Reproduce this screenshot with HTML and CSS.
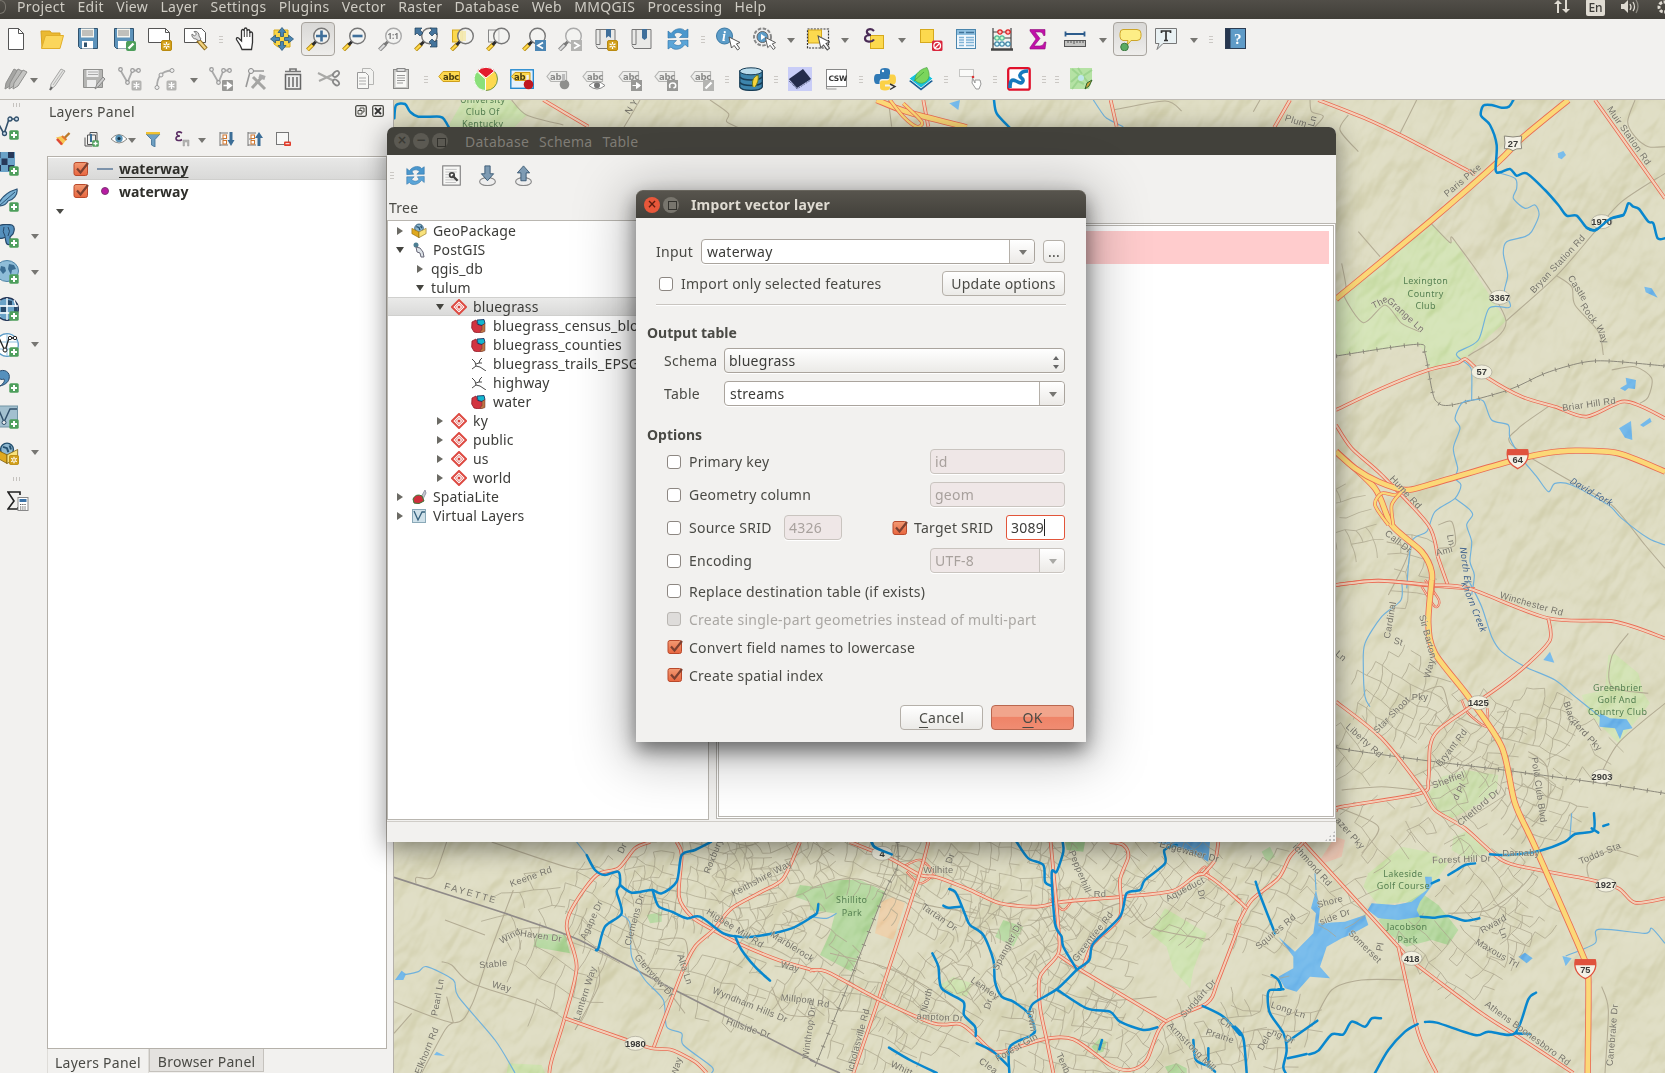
FILE: index.html
```html
<!DOCTYPE html>
<html lang="en">
<head>
<meta charset="utf-8">
<title>QGIS - Import vector layer</title>
<link rel="stylesheet" href="styles.css">
</head>
<body>
<svg class="defs" width="0" height="0" aria-hidden="true">
  <defs>
    <linearGradient id="gCheck" x1="0" y1="0" x2="0" y2="1"><stop offset="0" stop-color="#f29a73"/><stop offset="1" stop-color="#e8663f"/></linearGradient>
    <symbol id="plus" viewBox="0 0 10 10"><rect x=".3" y=".3" width="9.4" height="9.4" rx="1.5" fill="#4d9e5b"/><path d="M5 2v6M2 5h6" stroke="#fff" stroke-width="2"/></symbol>
    <symbol id="star" viewBox="0 0 11 11"><rect x=".5" y=".5" width="10" height="10" rx="1.5" fill="#d2a01b" stroke="#b98a10"/><path d="M5.500 2v7M2.500 3.700l6 3.600M8.500 3.700l-6 3.600" stroke="#fff" stroke-width="1.300"/><circle cx="5.500" cy="5.500" r="1" fill="#d2a01b"/></symbol>
    <symbol id="gstar" viewBox="0 0 11 11"><rect x=".5" y=".5" width="10" height="10" rx="1.500" fill="#b4b4b2"/><path d="M5.500 2v7M2.500 3.700l6 3.600M8.500 3.700l-6 3.600" stroke="#fff" stroke-width="1.300"/></symbol>
    <symbol id="lens" viewBox="0 0 24 24"><path d="M1.500 23L7.500 17" stroke="#b58a10" stroke-width="4"/><path d="M1.700 22.800L7.500 17" stroke="#ffd94a" stroke-width="2.300"/><path d="M6.500 18l4-4" stroke="#2c2c2c" stroke-width="3"/><circle cx="15.500" cy="9" r="7.800" fill="#f3f3f1" fill-opacity=".85" stroke="#777" stroke-width="1.400"/></symbol>
    <symbol id="glens" viewBox="0 0 24 24"><path d="M1.500 23L7.500 17" stroke="#888" stroke-width="4"/><path d="M1.700 22.800L7.500 17" stroke="#ddd" stroke-width="2"/><path d="M6.500 18l4-4" stroke="#777" stroke-width="3"/><circle cx="15.500" cy="9" r="7.800" fill="#f3f3f1" stroke="#aaa" stroke-width="1.400"/></symbol>
    <symbol id="cursor" viewBox="0 0 13 15"><path d="M1 1l2.500 11 2.600-2.600 3.400 4.600 2.200-1.600-3.300-4.500 3.600-1.400z" fill="#fff" stroke="#555" stroke-width="1"/></symbol>
    <symbol id="tag" viewBox="0 0 22 12"><path d="M5 1h15.500v10H5L1 6z" fill="#eeeeec" stroke="#b5b5b3" stroke-width="1.200"/></symbol>
    <symbol id="vnode" viewBox="0 0 24 24"><path d="M2 2.500L9.500 15.500l5-12h6" fill="none" stroke="#aaa" stroke-width="1.800"/><g fill="#eee" stroke="#999" stroke-width="1.200"><circle cx="2.500" cy="2.500" r="1.800"/><circle cx="9.500" cy="15.500" r="1.800"/><circle cx="14.500" cy="3.500" r="1.800"/><circle cx="20.500" cy="3.500" r="1.800"/></g></symbol>
    <symbol id="checked" viewBox="0 0 16 16"><rect x="1" y="1.500" width="13.500" height="13" rx="2" fill="url(#gCheck)" stroke="#b9492b"/><path d="M4 7.500l3.500 4L15 2" fill="none" stroke="#7d4030" stroke-width="2.200"/></symbol>
    <symbol id="target" viewBox="0 0 16 16"><path d="M8 1L15 8 8 15 1 8z" fill="#fff" stroke="#dd4a42" stroke-width="2"/><path d="M8 4.300L11.700 8 8 11.700 4.300 8z" fill="none" stroke="#e0635c" stroke-width=".9"/><circle cx="8" cy="8" r="1.500" fill="#d9443c"/></symbol>
    <symbol id="poly" viewBox="0 0 15 14"><path d="M1 3l4-2 1 4 7 1v6l-5 2-5-1L.7 9z" fill="#d23440" stroke="#8e1c28" stroke-width=".8"/><path d="M6 1l7-.5 1 4-3 2-4-1z" fill="#14b7d0" stroke="#125" stroke-width=".8"/><path d="M11 6.500l3-2v8l-4 1.500-1-2 2-1z" fill="#c07443" stroke="#633" stroke-width=".5"/></symbol>
    <symbol id="line" viewBox="0 0 15 14"><path d="M1 2l3 3 1 4 4 1 6 4M5 9L1 12M5 7l3-1 1-3M8 6h3M9 3l2-2" fill="none" stroke="#333" stroke-width=".9"/></symbol>
    <symbol id="refresh" viewBox="0 0 24 24"><path d="M2 11V4l3 2.500C10 0 17 1 19 4l3-2v8.500h-8.500l3-2.800C14 4.500 9 5 8 8l2 2.500z" fill="#4a97cd" stroke="#2a6fa5" stroke-width=".6"/><path d="M22 13v7l-3-2.500C14 24 7 23 5 20l-3 2v-8.500h8.500l-3 2.800C10 19.500 15 19 16 16l-2-2.500z" fill="#5ba5d8" stroke="#2a6fa5" stroke-width=".6"/></symbol>
    <symbol id="box" viewBox="0 0 18 16"><circle cx="9" cy="5" r="4.800" fill="#8fb8d0" stroke="#24506f"/><path d="M6 3l3 1 1 3M11 2l1 3" stroke="#24506f" stroke-width="1.500" fill="none"/><path d="M1 5l8 4v6.500L1 11z" fill="#dfa91f" stroke="#7c5e10" stroke-width=".6"/><path d="M17 5L9 9v6.500l8-4.500z" fill="#f8e27c" stroke="#7c5e10" stroke-width=".6"/></symbol>
  </defs>
</svg>

<nav class="menubar">
  <i class="orb"></i><span>Project</span><span>Edit</span><span>View</span><span>Layer</span><span>Settings</span><span>Plugins</span><span>Vector</span><span>Raster</span><span>Database</span><span>Web</span><span>MMQGIS</span><span>Processing</span><span>Help</span>
  <div class="tray">
    <svg width="18" height="16" viewBox="0 0 18 16"><path d="M5 14V4M13 1v10" stroke="#dfdbd2" stroke-width="2"/><path d="M1 5l4-4 4 4zM9 10l4 4 4-4z" fill="#dfdbd2"/></svg>
    <b>En</b>
    <svg width="20" height="16" viewBox="0 0 20 16"><path d="M1 5h3l4-4v13l-4-4H1z" fill="#dfdbd2"/><path d="M10 5q2 3 0 6M13 3q3 5 0 9" fill="none" stroke="#dfdbd2" stroke-width="1.300"/><path d="M16 1q4 6 0 13" fill="none" stroke="#8a877f" stroke-width="1.300"/></svg>
    <svg width="10" height="16" viewBox="0 0 10 16"><circle cx="9" cy="8" r="5" fill="none" stroke="#dfdbd2" stroke-width="3" stroke-dasharray="3 1.500"/></svg>
  </div>
</nav>

<div class="toolbars">
  <div class="bar bar1">
    <div class="t"><svg viewBox="0 0 24 24"><path d="M4.500 1.500h10l5 5v16h-15z" fill="#fff" stroke="#555"/><path d="M14.500 1.500v5h5" fill="none" stroke="#555"/></svg></div>
    <div class="t"><svg viewBox="0 0 24 24"><path d="M1 4h9l1.500 2H20v3H6L2 21z" fill="#eab932" stroke="#d8a320"/><path d="M5.500 8.500H23.500L20 21.500H1.500z" fill="#fbd65c" stroke="#e2ae29"/></svg></div>
    <div class="t"><svg viewBox="0 0 24 24"><path d="M2.500 1.500h19v20h-17l-2-2z" fill="#5d93bb" stroke="#31536e"/><rect x="5" y="1.500" width="13" height="9" fill="#f5f5f0"/><path d="M6 4h11M6 6h11M6 8h11" stroke="#8a8a86"/><rect x="6" y="14" width="11" height="7.500" fill="#fff"/><rect x="8" y="15.500" width="3" height="4.500" fill="#31536e"/></svg></div>
    <div class="t"><svg viewBox="0 0 24 24"><path d="M2.500 1.500h19v20h-17l-2-2z" fill="#5d93bb" stroke="#31536e"/><rect x="5" y="1.500" width="13" height="9" fill="#f5f5f0"/><path d="M6 4h11M6 6h11M6 8h11" stroke="#8a8a86"/><rect x="6" y="14" width="9" height="7.500" fill="#fff"/><rect x="14" y="14" width="10" height="10" rx="2" fill="#4d9e5b"/><path d="M16.500 21.500l5-5" stroke="#fff" stroke-width="2.400"/></svg></div>
    <div class="t"><svg viewBox="0 0 24 24"><path d="M.5 1.500h17l4 4v10H.5z" fill="#fff" stroke="#555"/><path d="M17.500 1.500v4h4" fill="none" stroke="#555"/><use href="#star" x="13" y="13" width="11" height="11"/></svg></div>
    <div class="t"><svg viewBox="0 0 24 24"><path d="M.5 1.500h17l4 4v10H.5z" fill="#fff" stroke="#555"/><path d="M14 13l8 9" stroke="#8d6b1c" stroke-width="4.500"/><path d="M15 14l6.500 7.500" stroke="#f2d27e" stroke-width="2.500"/><path d="M8 7a4 4 0 0 0 4 5l3 2 2-2-2-3a4 4 0 0 0-5-4.500l2.500 2.500-2 2z" fill="#ddd" stroke="#777"/></svg></div>
    <i class="grip g14"></i>
    <div class="t"><svg viewBox="0 0 24 24"><path d="M8 22.500L6 18 2.500 12.500C2 10.500 4 10 5.500 12l2 2V4c0-2 2.500-2 2.700 0V2.500c.3-2 2.600-2 2.800 0V4c.3-1.700 2.700-1.700 2.800 0v2c.5-1.500 2.700-1.300 2.700.5v9L17.500 22.500z" fill="#fff" stroke="#333" stroke-width="1.300"/><path d="M10.300 4v6M13 4v6M15.800 5v5" stroke="#333"/></svg></div>
    <div class="t"><svg viewBox="0 0 24 24"><path d="M4 3h14v5l2 2v10H8l-4-3z" fill="#fbd646" stroke="#d6a91c"/><path d="M12 .5l4 5h-2.500v4h-3v-4H8zM12 23.500l4-5h-2.500v-4h-3v4H8zM.5 12l5-4v2.500h4v3h-4V16zM23.500 12l-5-4v2.500h-4v3h4V16z" fill="#4b86b4" stroke="#2b5878" stroke-width=".8"/></svg></div>
    <div class="t on"><svg viewBox="0 0 24 24"><use href="#lens"/><path d="M15.500 3.500v11M10 9h11" stroke="#3f6f9a" stroke-width="2.600"/></svg></div>
    <div class="t"><svg viewBox="0 0 24 24"><use href="#lens"/><path d="M10.500 9h10" stroke="#3f6f9a" stroke-width="2.600"/></svg></div>
    <div class="t"><svg viewBox="0 0 24 24"><use href="#glens"/><text x="9.500" y="12.300" class="one">1:1</text></svg></div>
    <div class="t"><svg viewBox="0 0 24 24"><use href="#lens"/><path d="M1 1h7L6 3l3 3-3 3-3-3-2 2zM23 1v7l-2-2-3 3-3-3 3-3-2-2zM23 20h-7l2-2-3-3 3-3 3 3 2-2z" fill="#44749c" stroke="#24425c" stroke-width=".7"/></svg></div>
    <div class="t"><svg viewBox="0 0 24 24"><rect x="2.500" y="3" width="10" height="12" fill="#fcd94e" stroke="#d6a91c"/><use href="#lens"/><rect x="10" y="4" width="6" height="10" fill="#f4e69c" opacity=".7"/></svg></div>
    <div class="t"><svg viewBox="0 0 24 24"><rect x="2.500" y="3" width="10" height="12" fill="#f3f3f1" stroke="#888"/><use href="#lens"/><path d="M13 3v12" stroke="#ccc"/></svg></div>
    <div class="t"><svg viewBox="0 0 24 24"><use href="#lens"/><rect x="13" y="13" width="11" height="11" fill="#4b86b4"/><path d="M21 15.500l-5 3 5 3" fill="none" stroke="#fff" stroke-width="1.800"/></svg></div>
    <div class="t"><svg viewBox="0 0 24 24"><use href="#glens"/><rect x="13" y="13" width="11" height="11" fill="#b4b4b2"/><path d="M16 15.500l5 3-5 3" fill="none" stroke="#fff" stroke-width="1.800"/></svg></div>
    <div class="t"><svg viewBox="0 0 24 24"><path d="M2 2.500h4v15H2zM6 2.500h15v19H4l-2-3" fill="#e9e9e7" stroke="#777"/><path d="M12 2h5v9l-2.500-2-2.500 2z" fill="#3f6f9a"/><use href="#star" x="13" y="13" width="11" height="11"/></svg></div>
    <div class="t"><svg viewBox="0 0 24 24"><path d="M2 2.500h4v15H2zM6 2.500h15v19H4l-2-3" fill="#e9e9e7" stroke="#777"/><path d="M12 2h5v9l-2.500 2-2.500-2z" fill="#3f6f9a"/></svg></div>
    <div class="t"><svg viewBox="0 0 24 24"><use href="#refresh"/></svg></div>
    <i class="grip g14"></i>
    <div class="t"><svg viewBox="0 0 24 24"><circle cx="8.500" cy="9" r="8" fill="#5b9cc8" stroke="#3c7aa5"/><text x="6" y="14" class="info-i">i</text><use href="#cursor" x="12" y="9" width="13" height="15"/></svg></div>
    <div class="t"><svg viewBox="0 0 24 24"><circle cx="10.500" cy="10" r="8.500" fill="#eee" stroke="#888" stroke-width="2" stroke-dasharray="3.500 1.500"/><circle cx="10.500" cy="10" r="5.500" fill="#5b9cc8" stroke="#666"/><path d="M9 7l4.500 3L9 13z" fill="#fff"/><use href="#cursor" x="12.500" y="9.500" width="12" height="14"/></svg></div>
    <i class="dd d18"></i>
    <div class="t"><svg viewBox="0 0 24 24"><rect x="1.500" y="2" width="21" height="19" fill="none" stroke="#333" stroke-width="1.200" stroke-dasharray="2 1.200"/><rect x="2.500" y="3" width="13" height="13" fill="#fcd94e" stroke="#d6a91c"/><use href="#cursor" x="11" y="8" width="14" height="16"/></svg></div>
    <i class="dd d18"></i>
    <div class="t"><svg viewBox="0 0 24 24"><rect x="10.500" y="8.500" width="13" height="13" fill="#fcd94e" stroke="#d6a91c"/><path d="M14 4C11 1 6 2 7 5.500Q8 8 11 8 5 8 5 11.500c0 4 7 4 9 1" fill="none" stroke="#4b2d57" stroke-width="2.200"/></svg></div>
    <i class="dd d23"></i>
    <div class="t"><svg viewBox="0 0 24 24"><rect x="1.500" y="2.500" width="13" height="13" fill="#fcd94e" stroke="#d6a91c"/><rect x="13" y="13.500" width="10.500" height="10.500" rx="1.500" fill="#d9263c"/><circle cx="18.200" cy="18.700" r="3.300" fill="none" stroke="#fff" stroke-width="1.300"/><path d="M16 21l4.500-4.500" stroke="#fff" stroke-width="1.300"/></svg></div>
    <div class="t"><svg viewBox="0 0 24 24"><rect x="1.500" y="2.500" width="19" height="19" fill="#f0f7fc" stroke="#4a86ad"/><rect x="2" y="3" width="18" height="5" fill="#8fc0e0"/><path d="M4 5.500h5M11 5.500h8" stroke="#3f7299" stroke-width="1.500"/><path d="M4 10.500h5M11 10.500h8M4 13h5M11 13h8M4 15.500h5M11 15.500h8M4 18.500h5M11 18.500h8" stroke="#7fb3d6" stroke-width="1.300"/></svg></div>
    <div class="t"><svg viewBox="0 0 24 24"><path d="M2 1v21M20 1v21M2 5h18M2 11h18M2 17h18" stroke="#444" stroke-width="1.200"/><path d="M0 22.500h22" stroke="#444" stroke-width="2.500"/><g stroke-width="1.200"><g fill="#fbb" stroke="#d22"><circle cx="9" cy="5" r="2.200"/><circle cx="17" cy="5" r="2.200"/></g><g fill="#cfc" stroke="#5b9"><circle cx="6" cy="11" r="2.200"/><circle cx="11" cy="11" r="2.200"/></g><g fill="#dff" stroke="#48a"><circle cx="6" cy="17" r="2.200"/><circle cx="11" cy="17" r="2.200"/><circle cx="17" cy="17" r="2.200"/></g></g></svg></div>
    <div class="t"><svg viewBox="0 0 24 24"><path d="M3 2.500h15v6h-1.500Q16 5 13 5H8l5 6.500L7 19h6q3.500 0 4.500-4H19l-1 7H3v-1.500L9 12 3 4z" fill="#c010a8" stroke="#8d0b7b" stroke-width=".6"/></svg></div>
    <div class="t"><svg viewBox="0 0 24 24"><path d="M2.500 7h19M2.500 4.500v5M21.500 4.500v5" stroke="#2d5c8c" stroke-width="1.800"/><rect x="1.500" y="13.500" width="21" height="6" fill="#c4c4c2" stroke="#555"/><path d="M5 13v3M8 13v3M11 13v4M14 13v3M17 13v3M20 13v3" stroke="#555"/></svg></div>
    <i class="dd d19"></i>
    <div class="t on"><svg viewBox="0 0 24 24"><path d="M5 2.500h14q4 0 4 4v3q0 4-4 4h-6l-4 5 1-5H5q-3-.5-3-4v-3q0-4 3-4z" fill="#fdee86" stroke="#cda52a"/><circle cx="6.500" cy="20" r="3.800" fill="#5aab62" stroke="#3f7a44"/></svg></div>
    <div class="t"><svg viewBox="0 0 24 24"><path d="M1.500 1.500h21v15H9l-6 6 2-6H1.500z" fill="#e9f1f3" stroke="#777"/><path d="M7.500 6V4h9v2M12 4v9.500M10 13.500h4" stroke="#333" stroke-width="1.700" fill="none"/></svg></div>
    <i class="dd d20"></i><i class="grip g14"></i>
    <div class="t"><svg viewBox="0 0 24 24"><rect x="1.500" y="1.500" width="20" height="20" fill="#5f9bc7" stroke="#2c3c52"/><rect x="2" y="2" width="4.500" height="19" fill="#26364f"/><text x="10" y="17" class="q">?</text></svg></div>
  </div>
  <div class="bar bar2">
    <div class="t w26"><svg viewBox="0 0 24 24"><g stroke="#8f8f8d"><path d="M1 22l1-6L10 2l4 2L6 19z" fill="#a5a5a3"/><path d="M5 22l1-6L14 2l4 2-8 15z" fill="#b8b8b6"/><path d="M9 22l1-6L19 3l4 2-9 14z" fill="#c5c5c3"/></g></svg></div>
    <i class="dd d10"></i>
    <div class="t w37"><svg viewBox="0 0 24 24"><path d="M4 23l1-6L15 2l4 2L9 19z" fill="#e4e4e2" stroke="#a5a5a3"/><path d="M7 18L17 3.500" stroke="#b5b5b3"/><path d="M4 23l2-3" stroke="#666" stroke-width="2"/></svg></div>
    <div class="t"><svg viewBox="0 0 24 24"><path d="M1.500 2.500h19v18h-19z" fill="#b5b5b3" stroke="#8f8f8d"/><rect x="4.500" y="3" width="12" height="7" fill="#eee"/><path d="M6 5h10M6 7.500h10" stroke="#aaa"/><rect x="5" y="13" width="9" height="7" fill="#eee"/><path d="M13 22l2-5 6-7 2 2-6 7z" fill="#ccc" stroke="#888"/></svg></div>
    <div class="t"><svg viewBox="0 0 24 24"><use href="#vnode"/><use href="#gstar" x="13" y="13" width="11" height="11"/></svg></div>
    <div class="t"><svg viewBox="0 0 24 24"><path d="M3 20C3 10 8 4 17 3.500" fill="none" stroke="#aaa" stroke-width="1.800"/><g fill="#eee" stroke="#999"><circle cx="3" cy="20.500" r="2"/><circle cx="7" cy="8" r="2"/><circle cx="18" cy="3.500" r="2"/></g><use href="#gstar" x="12" y="13" width="11" height="11"/></svg></div>
    <i class="dd d19"></i>
    <div class="t"><svg viewBox="0 0 24 24"><use href="#vnode"/><rect x="13" y="13" width="11" height="11" rx="1" fill="#989896"/><path d="M14.500 18.500h4v-3l4 3-4 3v-3" fill="#fff" stroke="#fff" stroke-width="1.400"/></svg></div>
    <div class="t"><svg viewBox="0 0 24 24"><path d="M6 4h13M5 5L1 20" stroke="#999" stroke-width="1.600"/><circle cx="6" cy="4" r="2.500" fill="#eee" stroke="#888"/><path d="M7 21l11-12M8 10l12 12" stroke="#a5a5a3" stroke-width="3"/><path d="M14 9l6 2" stroke="#aaa" stroke-width="4"/></svg></div>
    <div class="t"><svg viewBox="0 0 24 24"><path d="M4.500 7.500h15v14.500h-15z" fill="#eee" stroke="#666" stroke-width="1.500"/><path d="M4 4.500h16M9 4V2h6v2M8 10v10M12 10v10M16 10v10" stroke="#777" stroke-width="1.700" fill="none"/></svg></div>
    <div class="t"><svg viewBox="0 0 24 24"><path d="M1 6l16 8M2 14l15-7" stroke="#a9a9a7" stroke-width="2"/><ellipse cx="19" cy="7" rx="3.500" ry="2.300" fill="none" stroke="#888" stroke-width="1.700" transform="rotate(-40 19 7)"/><ellipse cx="19" cy="15.500" rx="3.500" ry="2.300" fill="none" stroke="#888" stroke-width="1.700" transform="rotate(40 19 15.500)"/></svg></div>
    <div class="t"><svg viewBox="0 0 24 24"><path d="M9.500 1.500h8l3 3v13h-11z" fill="#f2f2f0" stroke="#b5b5b3"/><path d="M4.500 5.500h8l3 3v13h-11z" fill="#f8f8f6" stroke="#999"/><path d="M6 11h7M6 14h7M6 17h7" stroke="#aaa"/></svg></div>
    <div class="t"><svg viewBox="0 0 24 24"><rect x="4.500" y="2.500" width="15" height="19" fill="#c7c7c5" stroke="#8a8a88"/><rect x="6.500" y="5" width="11" height="15" fill="#f8f8f6"/><rect x="8" y="1.500" width="8" height="3" fill="#ddd" stroke="#888"/><path d="M8 8.500h8M8 11h8M8 13.500h8M8 16h6" stroke="#999"/></svg></div>
    <i class="grip"></i>
    <div class="t"><svg viewBox="0 0 24 24"><path d="M5 4.500h16.500v10H5L.8 9.500z" fill="#fdd84e" stroke="#cf9f1a"/><text x="5" y="12.500" class="abc">abc</text></svg></div>
    <div class="t"><svg viewBox="0 0 24 24"><circle cx="12" cy="12" r="11.500" fill="#fdd94f" stroke="#3b7a30" stroke-width=".7"/><path d="M12 11L3.500 4A11.500 11.500 0 0 1 20.500 4z" fill="#e31c2c" stroke="#fff" stroke-width="1"/><path d="M11.500 12v11.500A11.500 11.500 0 0 1 3 4.500z" fill="#8be07a" stroke="#fff" stroke-width="1"/></svg></div>
    <div class="t"><svg viewBox="0 0 24 24"><rect x=".8" y="2.800" width="22.500" height="18.500" fill="#e6f1fa" stroke="#2489cf" stroke-width="1.400"/><path d="M5 5.500h15v8H5L1.500 9.500z" fill="#fdd84e" stroke="#cf9f1a"/><text x="4" y="12.500" class="abc">ab</text><path d="M17.500 8v8" stroke="#eee" stroke-width="2.500"/><circle cx="18.500" cy="17.500" r="4.800" fill="#c01820"/></svg></div>
    <div class="t"><svg viewBox="0 0 24 24"><use href="#tag" x="0" y="3.500" width="22" height="12"/><text x="4" y="12.500" class="abc g">ab</text><circle cx="18.500" cy="17.500" r="4.800" fill="#8f8f8d"/><path d="M17.500 7v7" stroke="#bbb" stroke-width="3"/></svg></div>
    <div class="t"><svg viewBox="0 0 24 24"><use href="#tag" x="0" y="3.500" width="22" height="12"/><text x="5" y="12.500" class="abc g">abc</text><path d="M7 18.500q8-7.500 16 0-8 7-16 0z" fill="#fff" stroke="#888"/><circle cx="15" cy="18.300" r="3" fill="#777"/></svg></div>
    <div class="t"><svg viewBox="0 0 24 24"><use href="#tag" x="0" y="3.500" width="22" height="12"/><text x="5" y="12.500" class="abc g">abc</text><rect x="13" y="13" width="11" height="11" fill="#989896"/><path d="M14.500 18.500h4v-3l4 3-4 3v-3" fill="#fff" stroke="#fff"/></svg></div>
    <div class="t"><svg viewBox="0 0 24 24"><use href="#tag" x="0" y="3.500" width="22" height="12"/><text x="5" y="12.500" class="abc g">abc</text><rect x="13" y="13" width="11" height="11" fill="#989896"/><path d="M16 21q-1.500-5 2.500-5t3 4l-2 1" fill="none" stroke="#fff" stroke-width="1.600"/></svg></div>
    <div class="t"><svg viewBox="0 0 24 24"><use href="#tag" x="0" y="3.500" width="22" height="12"/><text x="5" y="12.500" class="abc g">abc</text><rect x="13" y="13" width="11" height="11" fill="#b4b4b2"/><path d="M15.500 21.500l6-6" stroke="#fff" stroke-width="2.300"/></svg></div>
    <i class="grip"></i>
    <div class="t"><svg viewBox="0 0 24 24"><path d="M.8 4v16c2 4.500 20.500 4.500 22.500 0V4z" fill="#3d85ad" stroke="#173c55" stroke-width="1.300"/><ellipse cx="12" cy="4.300" rx="11.200" ry="3.500" fill="#b9dcec" stroke="#173c55"/><path d="M1 10c3 4 19 4 22 0M1 15.500c3 4 19 4 22 0" stroke="#173c55" fill="none" stroke-width="1.500"/><path d="M14 20c-2-8 2-11 5-12 1 5-1 9-3 12" fill="#f5d33c" stroke="#6b7d1c"/></svg></div>
    <i class="grip"></i>
    <div class="t"><svg viewBox="0 0 24 24"><rect width="24" height="24" fill="#c9cdf7"/><path d="M1 12L15 2l8 10-14 9z" fill="#252c4c"/><path d="M1 12l8 9M1 14l8 8 14-9" fill="none" stroke="#4a5274" stroke-dasharray="1 1"/></svg></div>
    <div class="t"><svg viewBox="0 0 24 24"><path d="M2.500 8v14h10" fill="none" stroke="#999"/><rect x="2.500" y="2.500" width="20" height="17" fill="#fff" stroke="#888"/><text x="4.500" y="13.800" class="csw">CSW</text></svg></div>
    <i class="grip"></i>
    <div class="t"><svg viewBox="0 0 24 24"><path d="M7 7V4q0-3 5-3t5 3v6q0 2-2.500 2H9q-2.500 0-2.500 3v2H4q-3 0-3-5t3-5h8" fill="#2f79b5"/><path d="M16.500 7.500H20q3 0 3 5t-3 5h-8v2h5v1q0 3-5 3t-5-3v-5q0-2 2.500-2H14q2.500 0 2.500-3z" fill="#fbd147"/><circle cx="10" cy="4" r="1.200" fill="#fff"/><path d="M17 17l5 2.500-5 3" fill="none" stroke="#333" stroke-width="1.400"/></svg></div>
    <div class="t"><svg viewBox="0 0 24 24"><path d="M0 14l12 9.500L24 14l-12-6z" fill="#1d5f96"/><path d="M0 11.500L12 21l12-9.500L12 3z" fill="#16c1dd" stroke="#fff" stroke-width=".8"/><path d="M6 13C6 6 12 2 18 .5c3 6 3 11-1 14-4 3-8 2-11-1.500z" fill="#7bd55c" stroke="#3d9a3d" stroke-width=".6"/><path d="M5 14l10-9" stroke="#4fae3f"/></svg></div>
    <i class="grip"></i>
    <div class="t"><svg viewBox="0 0 24 24"><rect x="1.500" y="2.500" width="14" height="7" fill="#fafaf8" stroke="#c5c5c3"/><circle cx="15" cy="10" r="1.300" fill="#d33"/><path d="M14.500 11l2.500 5v-3h5l1 4-2 5h-3l-4-6z" fill="#fff" stroke="#999"/></svg></div>
    <i class="grip"></i>
    <div class="t"><svg viewBox="0 0 24 24"><rect x="1.200" y="1.200" width="21.500" height="21.500" rx="2" fill="#fff" stroke="#e0112b" stroke-width="2.300"/><path d="M3 21C3 13 5 12 9 14s6 3 7 0-4-3-3-6 4-4 8-4" fill="none" stroke="#1679bd" stroke-width="3.600"/></svg></div>
    <i class="grip"></i><i class="grip"></i>
    <div class="t"><svg viewBox="0 0 24 24"><path d="M1 1h22v12l-3 9H1z" fill="#b5e2a4"/><path d="M3 2l7 6-8 7M23 3l-9 6 7 9M9 1l4 6M3 22l6-8 6 3" stroke="#9dd48f" stroke-width="2" fill="none"/><circle cx="12" cy="11" r="3" fill="#bfe6ea"/><path d="M16 22l2-6 5-3-3 6z" fill="#d1a63c" stroke="#31612b"/></svg></div>
  </div>
</div>

<div class="workspace">
  <aside class="dock-tools">
    <i class="vgrip"></i>
    <div class="lt"><svg viewBox="0 0 24 24"><path d="M1 3l8 15 5-15h7" fill="none" stroke="#32506b" stroke-width="1.600"/><g fill="#cfe0ee" stroke="#32506b" stroke-width="1.300"><circle cx="9.500" cy="17.500" r="2"/><circle cx="15" cy="3" r="2"/><circle cx="21.500" cy="3" r="2"/></g><use href="#plus" x="14" y="14" width="10" height="10"/></svg></div>
    <div class="lt"><svg viewBox="0 0 24 24"><rect y="0" width="20" height="20" fill="#6ba3c8"/><path d="M1 0h4.500v6H1zM13 0h6v6h-6zM6.500 6.500h6V13h-6zM13 13h6v6h-6zM0 13h6v6H0z" fill="#27395a"/><use href="#plus" x="14" y="14" width="10" height="10"/></svg></div>
    <div class="lt"><svg viewBox="0 0 24 24"><path d="M2 20C5 9 12 4 22 1c1 6-4 11-9 12-2 4-6 5-9 5l-3 5" fill="#79b0d3" stroke="#2d5578" stroke-width="1.200"/><path d="M4 18L20 4" stroke="#2d5578"/><use href="#plus" x="14" y="14" width="10" height="10"/></svg></div>
    <div class="lt"><svg viewBox="0 0 24 24"><path d="M2 3q6-4 15-2 4 2 1 9l-3 3 1 7q-4 2-5-2l-1-5q-6 4-8-3z" fill="#5590bd" stroke="#27496a" stroke-width="1.200"/><path d="M9 3q-2 5 1 9M13 3q3 4 0 9" fill="none" stroke="#27496a"/><use href="#plus" x="14" y="14" width="10" height="10"/></svg><i class="dd"></i></div>
    <div class="lt"><svg viewBox="0 0 24 24"><ellipse cx="12" cy="11" rx="11.500" ry="10.500" fill="#8fbdd8" stroke="#4d83a6"/><path d="M6 6l4 1 1 4-3 3-3-4zM14 4l5 1 2 4-4 1-1 5-3-6zM9 17l4 1" fill="#3b6d92"/><use href="#plus" x="14" y="14" width="10" height="10"/></svg><i class="dd"></i></div>
    <div class="lt"><svg viewBox="0 0 24 24"><circle cx="12" cy="12" r="11.300" fill="#6ba3c8" stroke="#27395a" stroke-width="1.500"/><path d="M12 1v22M1 9h22M1 16h22M5 3q-4 9 0 17M19 3q4 9 0 17" stroke="#fff" stroke-width="1.300" fill="none"/><path d="M6 10h5v5H6zM13 3l4 1v4h-4zM19 10h3v5h-3z" fill="#27496a"/><use href="#plus" x="14" y="14" width="10" height="10"/></svg></div>
    <div class="lt"><svg viewBox="0 0 24 24"><circle cx="12" cy="12" r="11.300" fill="#fff" stroke="#5c9cc7" stroke-width="1.300"/><path d="M12 1v22M1 9h22M1 16h22" stroke="#8fc0e0"/><path d="M4 5l6 13 4-13h6" fill="none" stroke="#222" stroke-width="1.300"/><circle cx="10" cy="17" r="2" fill="#fff" stroke="#222"/><circle cx="15" cy="5" r="1.700" fill="#fff" stroke="#222"/><circle cx="20" cy="5" r="1.700" fill="#fff" stroke="#222"/><use href="#plus" x="14" y="14" width="10" height="10"/></svg><i class="dd"></i></div>
    <div class="lt"><svg viewBox="0 0 24 24"><path d="M3 3c6-4 13 0 11 7-1 4-5 6-9 7 4-3 5-5 4-7-4 2-9-3-6-7z" fill="#5590bd" stroke="#27496a"/><use href="#plus" x="14" y="14" width="10" height="10"/></svg></div>
    <div class="lt"><svg viewBox="0 0 24 24"><rect x="0" y="1" width="22.500" height="21" fill="#a3c0cf" stroke="#7395a6"/><path d="M3 3l6 14L15 4h7" fill="none" stroke="#32506b" stroke-width="1.500"/><circle cx="9" cy="17.500" r="2" fill="#eee" stroke="#32506b"/><use href="#plus" x="14" y="14" width="10" height="10"/></svg></div>
    <div class="lt"><svg viewBox="0 0 24 24"><use href="#box" x="0" y="1" width="24" height="23"/><use href="#star" x="14" y="14" width="10" height="10"/></svg><i class="dd"></i></div>
    <i class="vgrip v2"></i>
    <svg class="sumcalc" viewBox="0 0 22 21"><path d="M13 4V1H1l6 9-6 8h10v-2" fill="none" stroke="#222" stroke-width="1.600"/><rect x="11" y="6.500" width="10" height="13" fill="#fff" stroke="#888"/><rect x="12.500" y="8" width="7" height="3" fill="#3a72a8"/><path d="M13 13.500h6M13 16h6M13 18h6" stroke="#555" stroke-dasharray="1.300 .9"/></svg>
  </aside>

  <section class="layers">
    <header><span>Layers Panel</span><div class="pbtns">
      <svg viewBox="0 0 12 12"><rect x=".7" y=".7" width="10.600" height="10.600" rx="1.500" fill="none" stroke="#4a4a45" stroke-width="1.300"/><path d="M3 5.500h4v3.500H3zM5 5V3h4v4H7.500" fill="none" stroke="#4a4a45"/></svg>
      <svg viewBox="0 0 12 12"><rect x=".7" y=".7" width="10.600" height="10.600" rx="1.500" fill="none" stroke="#4a4a45" stroke-width="1.300"/><path d="M3 3l6 6M9 3L3 9" stroke="#333" stroke-width="1.800"/></svg></div>
    </header>
    <div class="ltools">
      <svg viewBox="0 0 16 16" class="m0"><path d="M14.500 2L9 7.500" stroke="#b97a2c" stroke-width="2.400"/><path d="M1 6.500l6-1.500 4 4-4 5.500z" fill="#f6c653"/><path d="M2 8l5 5.500" stroke="#df4a35" stroke-width="2.600"/><path d="M7 5l4.500 4" stroke="#e0762e" stroke-width="2"/></svg>
      <svg viewBox="0 0 16 16"><path d="M4.500 4v9.500h8V4zM2 6.500V15h7M7 4V1.500h7V11" fill="none" stroke="#555"/><path d="M8 3v8" stroke="#3c6e97" stroke-width="2"/><use href="#plus" x="9" y="9" width="7" height="7"/></svg>
      <svg viewBox="0 0 16 16"><path d="M0 8q8-9 16 0-8 8-16 0z" fill="#fff" stroke="#8a8a86"/><circle cx="8" cy="7.500" r="3.700" fill="#5a93b5"/><circle cx="8" cy="7.500" r="1.600" fill="#173347"/></svg><i class="dd d10"></i>
      <svg viewBox="0 0 16 16" class="fl"><path d="M1 3h14l-5 5.500V16l-3.500-2V8.500z" fill="#6fa0c2" stroke="#3d6f94" stroke-width=".8"/><rect x="1" y="1" width="14" height="2.400" fill="#f2c230"/></svg>
      <svg viewBox="0 0 16 16" class="ex"><path d="M8 2C5 0 2 1 3 3.500Q3.500 5 6 5 2 5 2 7.500c0 2.500 4 2.500 6 1" fill="none" stroke="#5a2d63" stroke-width="1.600"/><path d="M9 9h6v6h-1.500v-4h-3v4H9z" fill="#b5b5b3" stroke="#999" stroke-width=".5"/></svg><i class="dd d24"></i>
      <svg viewBox="0 0 16 16" class="e1"><path d="M1 1v14M1 2h8M1 14h8M2 8h3" stroke="#777"/><rect x="4" y="4" width="3.500" height="3.500" fill="#fff" stroke="#d0762e"/><rect x="4" y="9.500" width="3.500" height="3.500" fill="#fff" stroke="#d0762e"/><path d="M10.500 1h3v8h2L12 15 8.500 9h2z" fill="#3c6e97"/></svg>
      <svg viewBox="0 0 16 16" class="e2"><path d="M1 1v14M1 2h8M1 14h8M2 8h3" stroke="#777"/><rect x="4" y="4" width="3.500" height="3.500" fill="#fff" stroke="#d0762e"/><rect x="4" y="9.500" width="3.500" height="3.500" fill="#fff" stroke="#d0762e"/><path d="M10.500 15h3V7h2.500L12 1 8 7h2.500z" fill="#3c6e97"/></svg>
      <svg viewBox="0 0 16 16" class="e2"><rect x="1.500" y="1.500" width="12" height="12" fill="#f8f8f7" stroke="#777"/><rect x="9" y="10.500" width="7" height="4.500" rx="1" fill="#e03c2b"/><path d="M10.500 12.700h4" stroke="#fff"/></svg>
    </div>
    <div class="list">
      <div class="row sel"><svg class="ck"><use href="#checked"/></svg><i class="ln"></i><b class="u">waterway</b></div>
      <div class="row"><svg class="ck"><use href="#checked"/></svg><i class="pt"></i><b>waterway</b></div>
      <i class="dd dark"></i>
    </div>
    <footer><span class="tab act">Layers Panel</span><span class="tab">Browser Panel</span></footer>
  </section>
  <main class="map"><svg id="map" viewBox="394 100 1271 973" preserveAspectRatio="none">
    <defs>
      <filter id="relief" x="0" y="0" width="100%" height="100%" color-interpolation-filters="sRGB"><feTurbulence type="fractalNoise" baseFrequency=".024 .011" numOctaves="4" seed="7"/><feDiffuseLighting surfaceScale="16" diffuseConstant=".68" lighting-color="#fff"><feDistantLight azimuth="240" elevation="50"/></feDiffuseLighting></filter>
    </defs>
    <rect x="394" y="100" width="1271" height="973" fill="#dedcc2"/>
    <g id="ground"></g>
    <rect class="shade" x="-100" y="-500" width="2000" height="2000" transform="rotate(28 1000 500)" filter="url(#relief)"/>
    <g id="roads"></g>
    <g id="labels"></g>
  </svg></main>
</div>

<section class="win dbm">
  <div class="title"><i class="wb">×</i><i class="wb">−</i><i class="wb sq"></i><span>Database</span><span>Schema</span><span>Table</span></div>
  <div class="dbtools"><i class="grip"></i>
    <svg viewBox="0 0 24 24"><use href="#refresh"/></svg>
    <svg viewBox="0 0 24 24"><rect x="2" y="1" width="20" height="22" fill="#f7f7f5" stroke="#777" stroke-width="1.200"/><path d="M5 5h13M5 8h13M5 11h5M5 14h5M5 17h12M5 20h12" stroke="#bbb"/><path d="M13 12l6 6" stroke="#444" stroke-width="2.800"/><circle cx="12.500" cy="11.500" r="2.600" fill="none" stroke="#444" stroke-width="2"/></svg>
    <svg viewBox="0 0 24 24"><ellipse cx="12" cy="19" rx="9" ry="4.500" fill="#eee" stroke="#888" stroke-width="1.300"/><path d="M9 1h6v9h4l-7 8-7-8h4z" fill="#7e9bb3" stroke="#34536e"/></svg>
    <svg viewBox="0 0 24 24"><ellipse cx="12" cy="19" rx="9" ry="4.500" fill="#eee" stroke="#888" stroke-width="1.300"/><path d="M9 18h6V9h4L12 1 5 9h4z" fill="#7e9bb3" stroke="#34536e"/></svg>
  </div>
  <div class="panes">
    <div class="treebox"><label>Tree</label>
      <div class="tree">
        <div class="n"><i class="ar"></i><svg><use href="#box"/></svg>GeoPackage</div>
        <div class="n"><i class="ad"></i><svg viewBox="0 0 16 16"><circle cx="5" cy="3" r="2.500" fill="#4d7f93"/><path d="M5 5l1 5 3 1 1 4h3l-1-5-3-4z" fill="#dde3e8" stroke="#667"/></svg>PostGIS</div>
        <div class="n l1"><i class="ar"></i>qgis_db</div>
        <div class="n l1"><i class="ad"></i>tulum</div>
        <div class="n l2 sel"><i class="ad"></i><svg><use href="#target"/></svg>bluegrass</div>
        <div class="n l3"><svg><use href="#poly"/></svg>bluegrass_census_blo</div>
        <div class="n l3"><svg><use href="#poly"/></svg>bluegrass_counties</div>
        <div class="n l3"><svg><use href="#line"/></svg>bluegrass_trails_EPSG</div>
        <div class="n l3"><svg><use href="#line"/></svg>highway</div>
        <div class="n l3"><svg><use href="#poly"/></svg>water</div>
        <div class="n l2"><i class="ar"></i><svg><use href="#target"/></svg>ky</div>
        <div class="n l2"><i class="ar"></i><svg><use href="#target"/></svg>public</div>
        <div class="n l2"><i class="ar"></i><svg><use href="#target"/></svg>us</div>
        <div class="n l2"><i class="ar"></i><svg><use href="#target"/></svg>world</div>
        <div class="n"><i class="ar"></i><svg viewBox="0 0 16 16"><path d="M8 12L14 1l1 3-4 8z" fill="#c5cace" stroke="#99a"/><path d="M2 10q3-6 9-3l2 5q-5 4-10 2z" fill="#cf2e3c" stroke="#3d7a3a"/></svg>SpatiaLite</div>
        <div class="n"><i class="ar"></i><svg viewBox="0 0 16 16"><rect x="1.500" y="1.500" width="13" height="13" fill="#cfe1ea" stroke="#8aa9b8"/><path d="M3 3l4 9 4-8h3" fill="none" stroke="#35617d" stroke-width="1.300"/></svg>Virtual Layers</div>
      </div>
    </div>
    <div class="info"><div class="pink"></div></div>
  </div>
  <div class="status"><i class="resize"></i></div>
</section>

<section class="win dlg">
  <div class="title"><i class="wb close">×</i><i class="wb sq"></i><b>Import vector layer</b></div>
  <div class="form">
    <div class="r input"><label>Input</label><div class="combo"><span>waterway</span><em><i class="dd"></i></em></div><button class="btn dots">...</button></div>
    <div class="r only"><i class="cb"></i><span>Import only selected features</span><button class="btn upd">Update options</button></div>
    <hr>
    <h4 class="h1">Output table</h4>
    <div class="r tb s1"><label>Schema</label><div class="select"><span>bluegrass</span><i class="ud"></i></div></div>
    <div class="r tb"><label>Table</label><div class="combo"><span>streams</span><em><i class="dd"></i></em></div></div>
    <h4 class="h2">Options</h4>
    <div class="r op"><i class="cb"></i><span>Primary key</span><div class="fld off">id</div></div>
    <div class="r op"><i class="cb"></i><span>Geometry column</span><div class="fld off">geom</div></div>
    <div class="r op"><i class="cb"></i><span class="src">Source SRID</span><div class="fld off small">4326</div><svg class="ck"><use href="#checked"/></svg><span class="tgt">Target SRID</span><div class="fld focus">3089<i class="caret"></i></div></div>
    <div class="r op"><i class="cb"></i><span>Encoding</span><div class="combo off"><span>UTF-8</span><em><i class="dd"></i></em></div></div>
    <div class="r sm"><i class="cb"></i><span>Replace destination table (if exists)</span></div>
    <div class="r sm dis"><i class="cb"></i><span>Create single-part geometries instead of multi-part</span></div>
    <div class="r sm"><svg class="ck"><use href="#checked"/></svg><span>Convert field names to lowercase</span></div>
    <div class="r sm"><svg class="ck"><use href="#checked"/></svg><span>Create spatial index</span></div>
    <div class="actions"><button class="btn"><u>C</u>ancel</button><button class="btn ok"><u>O</u>K</button></div>
  </div>
</section>
<script src="map.js"></script>
</body>
</html>
```
FILE: styles.css
```css
* { box-sizing: border-box; }
html, body { margin: 0; width: 1665px; height: 1073px; overflow: hidden; }
body { display: flex; flex-direction: column; background: #f2f1ef; color: #4a4a45; font: 14px/19px "Noto Sans", "Open Sans", sans-serif; letter-spacing: .25px; position: relative; white-space: nowrap; }
i { font-style: normal; flex: none; }
svg { display: block; flex: none; }
.defs { position: absolute; }

.menubar { height: 19px; flex: none; display: flex; align-items: center; background: linear-gradient(#514e48, #403e38); color: #cfccc4; padding-bottom: 5px; letter-spacing: .36px; line-height: 14px; }
.menubar .orb { width: 6px; height: 14px; border: 1.500px solid #7a776f; border-left: 0; border-radius: 0 8px 8px 0; margin-right: 11px; }
.menubar span { margin-right: 12.200px; }
.tray { margin-left: auto; display: flex; align-items: center; gap: 15px; }
.tray b { background: #dfdbd2; color: #3c3b37; font-size: 12px; line-height: 17px; width: 19px; text-align: center; border-radius: 2px; font-weight: 500; letter-spacing: 0; }

.toolbars { height: 81px; flex: none; border-bottom: 1px solid #bdb9b3; background: #f2f1ef; }
.bar { display: flex; align-items: center; height: 40px; }
.bar1 { margin-left: -2px; }
.bar2 { padding-left: 3px; }
.t { width: 36px; height: 34px; display: flex; align-items: center; justify-content: center; flex: none; }
.t svg { width: 24px; height: 24px; }
.t.on { width: 34px; margin: 0 1px; border: 1px solid #a8a49e; border-radius: 4px; background: linear-gradient(#d9d8d6, #eeedeb); }
.w26 { width: 26px; } .w37 { width: 37px; }
.one { font: bold 8px "Noto Sans", sans-serif; fill: #777; letter-spacing: 0; }
.info-i { font: italic bold 14px "Liberation Serif", serif; fill: #fff; }
.q { font: bold 15px "Liberation Serif", serif; fill: #fff; }
.abc { font: bold 8.500px "DejaVu Sans", sans-serif; fill: #4a3c10; letter-spacing: -.3px; }
.abc.g { fill: #8a8a88; }
.csw { font: bold 7.500px "DejaVu Sans", sans-serif; fill: #333; letter-spacing: -.3px; }
.grip { width: 13px; height: 8px; background: repeating-linear-gradient(#cbc8c4 0 1px, transparent 1px 3px) center / 4px 7px no-repeat; }
.g14 { width: 14px; }
.dd { display: flex; justify-content: center; width: 10px; }
.dd::after { content: ""; border: 4px solid transparent; border-top: 5px solid #777672; border-bottom: 0; }
.bar .dd::after { margin-top: 2px; }
.d10 { width: 10px; } .d18 { width: 18px; } .d19 { width: 19px; } .d20 { width: 20px; } .d23 { width: 23px; } .d24 { width: 24px; }

.workspace { flex: 1; display: flex; min-height: 0; }
.dock-tools { width: 47px; flex: none; overflow: hidden; display: flex; flex-direction: column; padding-top: 3px; }
.vgrip { width: 7px; height: 4px; flex: none; margin: 0 0 3px 13px; background: repeating-linear-gradient(90deg, #c5c2be 0 1px, transparent 1px 3px); }
.lt { height: 36.100px; display: flex; align-items: center; flex: none; }
.lt svg { width: 24px; height: 24px; margin-left: -5px; }
.lt .dd { margin-left: 11px; }
.v2 { margin: 6px 0 10px 13px; }
.sumcalc { width: 22px; height: 21px; margin-left: 7px; }

.layers { width: 346px; flex: none; display: flex; flex-direction: column; }
.layers header { height: 22px; display: flex; align-items: center; justify-content: space-between; padding: 0 9px 0 2px; flex: none; }
.pbtns { display: flex; gap: 5px; }
.pbtns svg { width: 12px; height: 12px; }
.ltools { height: 34px; flex: none; display: flex; align-items: center; padding-bottom: 1px; }
.ltools svg { width: 16px; height: 16px; margin-left: 12px; }
.ltools svg.m0 { margin-left: 8px; }
.ltools .dd::after { margin-top: 4px; }
.ltools svg.fl { margin-left: 8px; } .ltools svg.ex { margin-left: 13px; } .ltools svg.e1 { margin-left: 5px; } .ltools svg.e2 { margin-left: 12px; }
.list { flex: 1; background: #fff; border: 1px solid #b5b1aa; width: 340px; padding-top: 1px; }
.row { height: 22px; display: flex; align-items: center; padding-left: 25px; color: #2f2f2b; }
.row.sel { background: linear-gradient(#e8e8e7, #d9d9d8); border-bottom: 1px solid #cfcfcd; }
.row b { font-size: 14px; letter-spacing: 0; }
.row .u { text-decoration: underline; text-underline-offset: 3px; }
.ck { width: 16px; height: 16px; }
.ln { width: 16px; height: 2px; background: #7d93ab; margin: 0 6px 0 8px; }
.pt { width: 8px; height: 8px; border-radius: 50%; background: #b81ba3; border: 1px solid #7e3575; margin: 0 10px 0 12px; }
.dark { margin: 7px 0 0 7px; } .dark::after { border-top-color: #4a4a45; }
.layers footer { height: 24px; display: flex; flex: none; }
.tab { padding: 0 8px; line-height: 26px; height: 23px; border: 1px solid #c5c2bd; border-top: 0; background: #e4e2df; overflow: visible; }
.tab.act { background: #f2f1ef; height: 24px; line-height: 28px; border-bottom: 0; padding: 0 7px; border-color: #dedcd8; }
.map { flex: 1; min-width: 0; border-left: 1px solid #b5b1aa; position: relative; overflow: hidden; }
.map > svg { width: 1271px; height: 973px; }

.win { position: absolute; background: #f2f1ef; border-radius: 7px 7px 0 0; display: flex; flex-direction: column; }
.title { height: 28px; flex: none; border-radius: 7px 7px 0 0; display: flex; align-items: center; }
.wb { width: 16px; height: 16px; border-radius: 50%; background: #5b5952; color: #3a3934; font: bold 12px/15px "DejaVu Sans", sans-serif; text-align: center; margin-right: 3px; letter-spacing: 0; }
.sq::after { content: ""; display: block; width: 7px; height: 7px; border: 1px solid #33322d; margin: 4.500px; }
.dbm { left: 387px; top: 127px; width: 949px; height: 715px; box-shadow: 0 6px 26px rgba(0,0,0,.45); }
.dbm .title { background: #42413b; color: #7f7c75; padding-left: 7px; }
.dbm .title span { margin-right: 10px; } .dbm .title .sq { margin-right: 17px; }
.dbtools { height: 40px; flex: none; display: flex; align-items: center; gap: 15px; }
.dbtools svg { width: 21px; height: 21px; } .dbtools .grip { width: 10px; margin-right: -7px; }
.panes { flex: 1; display: flex; min-height: 0; gap: 7px; }
.treebox { width: 322px; display: flex; flex-direction: column; }
.treebox label { padding: 3px 2px 0; height: 25px; }
.tree { flex: 1; background: #fff; border: 1px solid #b9b6b0; overflow: hidden; color: #3c3c39; letter-spacing: .15px; }
.n { height: 19px; line-height: 19px; display: flex; align-items: center; padding-left: 6px; }
.n svg { width: 16px; height: 16px; margin: 0 6px 0 6px; }
.l1 { padding-left: 26px; } .l2 { padding-left: 46px; } .l3 { padding-left: 78px; }
.l1 i { margin-right: 6px; }
.l3 svg { width: 15px; height: 14px; margin: 0 7px 0 5px; }
.n.sel { background: linear-gradient(#eaeae9, #dadad9); border: solid #d0d0ce; border-width: 1px 0; }
.ar, .ad { width: 11px; height: 10px; display: flex; align-items: center; justify-content: center; }
.ar::after { content: ""; border: 4px solid transparent; border-left: 6px solid #6b6a64; border-right: 0; }
.ad::after { content: ""; border: 4px solid transparent; border-top: 6px solid #44443f; border-bottom: 0; }
.info { flex: 1; background: #fff; border: 3px double #b9b6b0; margin: 28px 0 1px; padding: 5px 4px; }
.pink { height: 33px; background: #ffcccd; }
.status { height: 21px; margin-top: 1px; border-top: 1px solid #d0cdc8; display: flex; justify-content: flex-end; align-items: flex-end; }
.resize { width: 12px; height: 12px; background: radial-gradient(circle, #bbb 1px, transparent 1.200px) 0 0 / 4px 4px; clip-path: polygon(100% 0, 100% 100%, 0 100%); }

.dlg { left: 636px; top: 190px; width: 450px; height: 552px; box-shadow: 0 8px 20px rgba(0,0,0,.5), 0 8px 54px 10px rgba(0,0,0,.26); }
.dlg .title { background: linear-gradient(#57544d, #42403a); color: #dfdbd2; padding-left: 8px; border-top: 1px solid #67645c; }
.title .close { background: #e8573a; color: #5d1d0f; }
.dlg .title .sq { background: #78756d; }
.dlg .title b { margin-left: 9px; font-size: 14px; letter-spacing: .15px; }
.form { display: flex; flex-direction: column; flex: 1; padding: 18px 21px 0 0; }
.r { display: flex; align-items: center; height: 33px; flex: none; }
.input { padding-left: 20px; height: 31px; } .input label { width: 45px; }
.input .combo { width: 334px; margin-right: 8px; }
.combo, .select, .fld { height: 25px; border: 1px solid #aaa49d; border-radius: 4px; background: #fff; display: flex; align-items: center; color: #3c3c39; padding-left: 5px; box-shadow: 0 1px 0 #fff; }
.combo em { margin-left: auto; width: 25px; height: 23px; border-left: 1px solid #b5b0a9; background: linear-gradient(#fff, #eceae7); border-radius: 0 4px 4px 0; display: flex; align-items: center; justify-content: center; padding: 2px 0 0 2px; }
.btn { font: inherit; letter-spacing: inherit; color: #4a4a45; height: 25px; border: 1px solid #b5b0a9; border-radius: 4px; background: linear-gradient(#fff, #ebeae7); padding: 0; line-height: 22px; }
.dots { width: 22px; height: 23px; line-height: 20px; }
.only { padding-left: 23px; height: 33px; } .upd { width: 123px; margin-left: auto; letter-spacing: .2px; }
.cb { width: 14px; height: 14px; border: 1px solid #8d8782; border-radius: 3px; background: #fff; margin-right: 8px; }
hr { border: 0; border-top: 1px solid #c9c5c0; border-bottom: 1px solid #fff; margin: 4px -1px 0 20px; height: 2px; flex: none; }
h4 { margin: 0 0 0 11px; font-size: 14px; letter-spacing: 0; line-height: 20px; flex: none; }
.h1 { margin-top: 17px; } .h2 { margin-top: 15px; }
.tb { padding-left: 28px; } .tb.s1 { margin-top: 1px; } .tb label { width: 60px; } .tb .combo, .tb .select { flex: 1; }
.select { background: linear-gradient(#fff, #ebeae7); padding-right: 5px; padding-left: 4px; }
.ud { margin-left: auto; }
.ud::before, .ud::after { content: ""; display: block; border: 3px solid transparent; }
.ud::before { border-bottom: 4px solid #666; border-top: 0; margin-bottom: 5px; margin-top: 3px; } .ud::after { border-top: 4px solid #666; border-bottom: 0; }
.op { padding-left: 31px; }
.op > .fld, .op > .combo { margin-left: auto; width: 135px; padding-left: 4px; }
.op > .small { width: 58px; margin-left: 13px; }
.op .ck { margin-left: 50px; margin-right: 6px; }
.fld.off, .combo.off { background: #efe7e7; color: #a8a19d; border-color: #c9c4bf; }
.off em { border-color: #c9c4bf; } .off .dd { opacity: .6; }
.op > .focus { width: 59px; border: 1.500px solid #e2553a; border-radius: 3px; }
.caret { width: 1px; height: 17px; background: #222; }
.src { width: 82px; }
.sm { height: 28px; padding-left: 31px; } .sm .ck { margin-right: 6px; }
.dis { color: #aaa7a3; } .dis .cb { background: #dedcda; border-color: #b9b6b2; }
.actions { display: flex; justify-content: flex-end; gap: 8px; margin: 16px -9px 0 0; }
.actions .btn { width: 83px; } .actions u { text-underline-offset: 4px; }
.btn.ok { background: linear-gradient(#f1a58c 0 45%, #ef8468 50%, #f08c72); border-color: #b9674f; }

/* map */
.shade { mix-blend-mode: soft-light; opacity: .5; }
.road { fill: none; stroke-linejoin: round; stroke-linecap: butt; }
.road.case { stroke: #ea6c54; } .road.red { stroke: #f2ddc6; } .road.hwy { stroke: #fbd877; }
.road.street { stroke: #aba58d; stroke-width: .9; opacity: .75; }
.road.lane { stroke: #b3ac94; stroke-width: 3.200; }
.road.rail { stroke: #8c897b; stroke-width: 3; }
.road.county { stroke: #8f8a88; stroke-width: 5; }
.road.creek { stroke: #6fb1dc; stroke-width: 3.500; }
.road.water { stroke: #0987ce; stroke-width: 7.500; stroke-linecap: round; }
.lab { font-family: "Liberation Sans", Arial, sans-serif; fill: #77746a; text-anchor: middle; dominant-baseline: central; letter-spacing: 1px; font-size: 28px; paint-order: stroke; stroke: #e0dfc8; stroke-width: 3px; stroke-opacity: .6; }
.lab.park { font-family: "Noto Sans", sans-serif; fill: #568052; stroke: none; font-size: 27px; }
.lab.creekname { fill: #44648c; font-style: italic; font-family: "Noto Sans", sans-serif; }
.lab.shield { fill: #3a3a38; font-weight: bold; stroke: none; font-size: 28px; letter-spacing: 0; }
.lab.fay { letter-spacing: 6px; }
```
FILE: map.js
```javascript
// Vector base map: each sheet has its own origin and is digitised at 3 units per pixel.
const NS = 'http://www.w3.org/2000/svg';
const sheets = { A: [1235, 95], B: [1235, 580], C: [385, 800], D: [810, 800], E: [420, 0], F: [840, 0] };
const ground = document.getElementById('ground');
const roadsLayer = document.getElementById('roads');
const labelsLayer = document.getElementById('labels');

function add(parent, tag, attrs, text) {
  const el = document.createElementNS(NS, tag);
  for (const k in attrs) el.setAttribute(k, attrs[k]);
  if (text) el.textContent = text;
  parent.appendChild(el);
  return el;
}
function place(s) { return `translate(${sheets[s][0]} ${sheets[s][1]}) scale(.33333)`; }
function smooth(str) {
  const n = str.trim().split(/[\s,]+/).map(Number), p = [];
  for (let i = 0; i < n.length; i += 2) p.push([n[i], n[i + 1]]);
  let d = `M${p[0]}`;
  for (let i = 0; i < p.length - 1; i++) {
    const a = p[i - 1] || p[i], b = p[i], c = p[i + 1], e = p[i + 2] || c;
    d += `C${b[0] + (c[0] - a[0]) / 7} ${b[1] + (c[1] - a[1]) / 7} ${c[0] - (e[0] - b[0]) / 7} ${c[1] - (e[1] - b[1]) / 7} ${c}`;
  }
  return d;
}

const areas = [
  ['A', '#d3e3b5', '303 610 588 385 645 443 660 438 813 678 690 790 665 805 585 822 572 775 550 748 303 783'],
  ['B', '#d3e3b5', '1120 225 1140 222 1210 280 1225 340 1245 370 1150 490 1060 400 1040 345 1110 330'],
  ['B', '#cfe0b2', '580 640 620 590 690 570 790 585 785 640 700 690 650 715 590 680'],
  ['B', '#cfe0b2', '655 770 700 752 765 815 700 840 650 810'],
  ['B', '#d0e2b1', '400 880 500 800 600 820 640 850 560 960 430 975 385 920'],
  ['B', '#b8d9a3', '430 1020 560 940 610 975 670 1050 640 1095 590 1080 515 1100 460 1060'],
  ['B', '#efc8b4', '255 840 300 770 330 780 320 830 270 848'],
  ['B', '#b8d9a3', '80 815 105 800 120 830 95 845'],
  ['E', '#cfe3b2', '90 370 130 300 270 300 320 345 280 385 90 385'],
  ['C', '#b6d8a1', '455 400 540 405 555 460 445 440'],
  ['C', '#b6d8a1', '785 345 830 335 830 365 795 370'],
  ['C', '#b6d8a1', '1245 255 1300 262 1300 315 1230 290'],
  ['C', '#d0e2b1', '370 790 470 795 480 819 365 819'],
  ['D', '#b6d8a1', '0 265 80 240 150 240 225 275 170 410 125 515 30 465 60 400 75 340 0 330'],
  ['D', '#eccfa9', '215 305 250 290 285 310 250 420 195 400'],
  ['D', '#b6d8a1', '580 360 640 380 610 440 555 410'],
  ['D', '#cfe3b2', '1065 325 1190 400 1150 510 1140 565 1090 510 1070 440 1020 400'],
  ['D', '#cfe3b2', '390 555 430 530 485 550 470 590 410 580'],
  ['D', '#a9cf97', '765 126 825 126 820 155 770 150'],
  ['D', '#b6d8a1', '845 740 870 715 890 725 880 755 860 760'],
  ['D', '#b6d8a1', '1065 800 1100 790 1130 805 1130 819 1075 819'],
  ['A', '#72b8ea', '968 175 985 168 993 180 980 193 970 188'],
  ['A', '#72b8ea', '1155 880 1175 868 1172 848 1203 855 1200 882 1180 880 1170 888'],
  ['A', '#72b8ea', '1152 1000 1188 978 1192 1035 1170 1028'],
  ['A', '#72b8ea', '1215 990 1245 968 1250 980 1225 996'],
  ['A', '#72b8ea', '1228 575 1250 580 1268 608 1232 592'],
  ['B', '#72b8ea', '925 240 945 215 958 248'],
  ['B', '#72b8ea', '1095 400 1125 415 1175 418 1193 445 1165 450 1155 478 1140 445 1093 440'],
  ['B', '#72b8ea', '130 1190 175 1165 175 1130 130 1070 180 1115 235 1060 243 1000 228 985 243 930 255 985 250 1030 330 1025 390 1005 400 1035 345 1065 320 1075 275 1100 255 1160 285 1195 225 1190 185 1235 150 1225'],
  ['B', '#72b8ea', '398 990 410 970 480 975 530 965 575 930 570 890 590 890 592 915 555 965 545 990 555 1010 490 1020 430 1015'],
  ['B', '#72b8ea', '850 1130 870 1118 893 1135 875 1150'],
  ['B', '#72b8ea', '982 1128 1010 1135 992 1158'],
  ['C', '#72b8ea', '30 540 50 512 63 522 55 540'],
  ['C', '#72b8ea', '147 765 155 755 180 768'],
  ['D', '#64a9dc', '1040 126 1200 126 1195 185 1130 150'],
  ['F', '#72b8ea', '328 310 360 300 355 330']
];
for (const [s, f, p] of areas) add(ground, 'polygon', { points: p, fill: f, transform: place(s) });

// Residential street mesh: x, y, half width, half height, angle, spacing
let seed = 11;
const rnd = () => (seed = (seed * 16807) % 2147483647) / 2147483647;
const mesh = [
  [620, 905, 60, 52, 20, 10], [700, 880, 75, 45, 5, 9], [770, 875, 60, 60, -28, 9], [800, 960, 60, 50, 30, 10], [700, 980, 55, 40, 20, 15],
  [565, 960, 50, 50, 18, 17], [520, 905, 40, 30, -20, 14], [860, 860, 50, 30, 15, 11], [940, 890, 65, 45, 25, 9], [1010, 880, 60, 50, 0, 10],
  [1085, 880, 60, 50, 30, 10], [1000, 950, 70, 45, -30, 10], [930, 1000, 55, 50, 35, 10], [870, 1010, 50, 55, 20, 12], [1080, 960, 55, 50, 30, 10],
  [1060, 1035, 60, 45, 10, 10], [1140, 1045, 60, 40, 40, 10], [1210, 1030, 45, 50, -20, 11], [1180, 880, 60, 50, 40, 10], [1265, 900, 45, 50, 30, 10],
  [1270, 1020, 40, 50, 10, 13], [1350, 520, 22, 35, -25, 11], [1405, 570, 22, 45, 10, 13], [1400, 690, 45, 45, 20, 11], [1470, 730, 45, 45, 40, 10],
  [1530, 740, 38, 60, 15, 10], [1370, 740, 35, 35, 45, 14], [1540, 810, 40, 35, 30, 10], [1450, 800, 50, 40, -35, 11], [1500, 890, 65, 40, 40, 11],
  [1450, 955, 55, 30, 35, 11], [1380, 830, 40, 35, 40, 13], [1330, 900, 35, 35, -40, 13], [1590, 740, 30, 25, 45, 15], [1500, 930, 30, 35, 10, 10]
];
for (const [cx, cy, rx, ry, ang, st] of mesh) {
  const cols = Math.ceil(rx * 2 / st), rows = Math.ceil(ry * 2 / (st * 1.4)), g = [];
  for (let r = 0; r <= rows; r++) {
    g.push([]);
    for (let c = 0; c <= cols; c++) g[r].push([-rx + c * st + (rnd() - .5) * st * .5, -ry + r * st * 1.4 + Math.sin(c / 2.5 + cx) * st * .6 + (rnd() - .5) * st * .35]);
  }
  const inside = p => (p[0] / rx) ** 2 + (p[1] / ry) ** 2 < 1.15;
  let d = '';
  for (let r = 0; r <= rows; r++) for (let c = 0; c <= cols; c++) {
    const p = g[r][c];
    if (!inside(p)) continue;
    if (c < cols && rnd() < .72) d += `M${p}L${g[r][c + 1]}`;
    if (r < rows && rnd() < .6) { const q = g[r + 1][c]; d += `M${p}Q${(p[0] + q[0]) / 2 + 2} ${(p[1] + q[1]) / 2} ${q}`; }
  }
  add(roadsLayer, 'path', { d, class: 'road street', transform: `translate(${cx} ${cy}) rotate(${ang})` });
}

const roads = {
  lane: [
    ['A', '588 385 645 443 660 438 813 678 700 783'], ['A', '813 678 965 542 1080 410 1160 320 1290 235'], ['A', '370 410 435 485'], ['A', '320 505 333 575 325 600 385 683 450 630 500 685 555 710'],
    ['A', '965 542 1010 575 1020 630 1090 710 1105 780'], ['A', '545 15 495 115'], ['A', '1200 15 1178 80 1200 125 1240 155 1290 155'], ['A', '340 60 315 105 370 170'], ['A', '225 15 230 50 265 65 220 115'],
    ['A', '1130 825 1200 815 1250 850 1240 905 1215 925'], ['A', '940 935 850 1000 830 1050 1010 1160 1130 1230 1230 1350 1290 1420'], ['A', '455 1340 520 1370 460 1500'], ['A', '610 1290 650 1280 660 1350 610 1360'],
    ['B', '1290 370 1150 490 1090 600'], ['B', '500 390 540 350 620 320 650 400 740 440'], ['B', '880 515 935 560 935 680 890 740'], ['B', '1060 890 1060 850 1130 810 1210 830'], ['B', '1100 1220 1120 1290 1110 1479'], ['B', '230 1340 290 1230 380 1200 520 1200'],
    ['B', '303 680 430 740 380 820'], ['B', '320 630 440 620 540 630'], ['B', '640 1000 760 990 860 920 900 870'], ['B', '1180 160 1130 230 1130 320 1240 340'],
    ['C', '185 126 145 230 95 232 93 250'], ['C', '320 126 560 205 640 200'], ['C', '27 605 205 668 260 615 310 470 385 270'], ['C', '170 485 200 495 260 550 430 605 520 640'], ['C', '180 360 300 405'], ['C', '205 668 180 690 110 819'], ['C', '570 690 640 560 640 500'], ['C', '205 668 185 590'],
    ['C', '720 340 760 460 840 560 900 640'], ['C', '1160 560 1200 640 1290 650'], ['C', '27 700 80 640'], ['C', '820 420 900 420 910 520'],
    ['D', '260 126 250 210 330 290'], ['D', '0 265 80 240 160 240 330 310 500 340'], ['D', '860 340 940 310 1010 380 1200 420'], ['D', '830 560 900 600 1040 590'], ['D', '60 460 220 500 350 560 480 660'],
    ['E', '275 300 320 345 430 375'], ['E', '870 300 925 340 920 365 960 385'], ['E', '660 300 610 385'], ['F', '820 330 975 303 1025 333'], ['F', '145 300 155 380'], ['F', '1260 300 1240 335']
  ],
  rail: [
    ['A', '303 783 545 748 570 775 590 880 605 920 650 930 820 885 930 835 1040 803 1120 798 1290 813'],
    ['B', '303 500 330 508 560 540 820 572 1100 610 1290 640'], ['D', '263 126 262 200 225 275 120 540 15 800']
  ],
  county: [['C', '27 232 360 340 560 410 640 450 850 560 1290 785'], ['D', '0 780 90 819']],
  creek: [
    ['A', '785 232 840 250 845 280 835 310 870 340 900 330 912 360 890 410 870 425 815 440 805 475 818 540 808 590 825 625 820 638 762 640 730 735 670 770 668 785 700 810 710 830 710 915'],
    ['A', '710 915 680 925 660 970 675 1000 655 1060 668 1120 660 1150 678 1170 660 1210 600 1250 575 1310 530 1340 515 1480'], ['A', '660 1210 700 1240 713 1260 695 1290 710 1340 705 1400 718 1440 710 1500'],
    ['A', '710 915 745 918 770 975 820 990 825 1030 860 1090 905 1145 940 1190 960 1165 1010 1170 1120 1230 1160 1270 1240 1330 1290 1350'],
    ['B', '500 0 498 60 440 110 390 190 385 260 390 350 405 380'], ['B', '700 0 740 80 770 170 800 215 870 260 960 300 1020 350 1095 410'], ['B', '992 1128 1080 1090 1090 1048 1230 1060 1250 1045 1290 1090'], ['B', '240 880 243 930'], ['B', '1010 700 1005 770'],
    ['C', '55 525 100 515 125 500 205 540 220 590 330 720 390 819'], ['C', '575 126 605 165'], ['C', '710 345 735 370 740 470 780 540 835 600 845 680 890 700 895 735 980 800 980 819'], ['F', '760 300 780 330 800 355 850 380'], ['D', '0 350 50 355 80 340']
  ],
  red: [
    ['A', '165 15 118 97'], ['A', '250 15 390 70 500 122 720 238'], ['A', '1080 15 1290 310'], ['A', '303 945 440 880 580 825 665 805 690 792 715 812 760 850 860 905 960 935 1055 965 1160 920 1220 935 1290 970'],
    ['A', '303 990 350 1060 440 1140 580 1290 610 1390 640 1475'], ['A', '303 1470 430 1457 590 1472 720 1482'],
    ['B', '303 15 430 2 590 15 700 25 940 115 1140 125 1290 175'], ['B', '940 115 945 180 880 250 800 315 700 385 610 450 585 500 580 600 555 640 320 680 303 692'],
    ['B', '303 365 440 475 560 625 600 690 690 745 800 840 900 868 1060 898 1150 925 1200 968 1290 955'], ['B', '205 787 490 1100 520 1135 740 1300 850 1370 1015 1479'], ['B', '205 787 165 830 130 895 50 960 10 1030 0 1060'], ['B', '0 950 35 985'], ['B', '490 1100 550 1360 605 1479'],
    ['C', '795 126 750 145 700 205 635 225 570 310 545 380 575 500 540 650 500 780 493 819'], ['C', '875 126 890 165 882 290 920 350 985 390 1060 430 1180 480 1290 512'], ['C', '1245 126 1195 235 1130 275 1040 325 985 390 930 440 890 520 805 745'], ['C', '540 655 720 718 800 745 860 750 930 785 965 819'],
    ['D', '120 126 240 175 330 225 380 232 480 270 570 310 680 320 760 305 940 290 1090 272 1180 222 1290 305'], ['D', '355 126 325 235 205 600 130 819'], ['D', '0 512 50 515 200 595 370 670 450 672 500 710 550 755 600 750 700 718 790 718 900 795 960 810 1010 780 1060 670 1190 610 1225 540 1290 370'],
    ['D', '722 126 745 380 745 460 690 530 690 620 710 720 730 819'], ['D', '745 465 820 515 1070 665'], ['D', '820 500 850 430 930 350 930 240 955 170 940 135 900 126'], ['D', '1225 126 1215 180 1180 222'],
    ['E', '370 300 505 380'], ['F', '250 300 265 380'], ['F', '812 300 830 380']
  ],
  hwy: [
    ['A', '1000 15 860 130 790 200 590 375 303 612'], ['A', '303 1070 420 1180 470 1290 560 1370 590 1430 588 1500'], ['A', '303 1070 360 1120 430 1160 510 1185 580 1170 820 1100 930 1075 1020 1067 1150 1075 1290 1130'],
    ['B', '590 0 580 130 600 220 700 350 800 500 840 670 900 800 1045 1130 1060 1190 1058 1479'],
    ['F', '110 300 200 335 380 382']
  ],
  slip: [['A', '510 1185 480 1200 440 1195 420 1230 460 1290'], ['A', '500 1190 470 1230 475 1290'], ['F', '150 300 190 350 230 380 245 365 190 310']],
  ramp: [['B', '570 0 612 60 600 80 560 20'], ['B', '680 360 700 400 755 440 757 385'], ['D', '280 200 330 180 370 220 330 250 290 215'], ['D', '720 295 760 330 790 295'], ['D', '1155 230 1185 200 1200 240']],
  water: [
    ['A', '835 15 822 35 800 38 770 30 745 32 738 62 765 90 785 150 782 225 795 232 825 222 845 242 875 235 930 285 970 330 995 362 1025 362 1055 398 1082 405 1125 372 1165 360 1180 325 1195 335 1212 342 1240 380 1255 385 1268 430 1290 430'],
    ['B', '62 905 75 945 120 1060'], ['B', '765 823 820 825 915 812 990 785 1020 762 1075 752 1077 700'], ['B', '1070 745 1090 758'], ['B', '1105 738 1120 733'], ['B', '640 885 665 870 690 855 720 850'], ['B', '590 910 612 900'], ['B', '557 1010 600 1013 640 1008 690 1022 733 1015'],
    ['B', '110 1185 130 1200 138 1228 105 1230 98 1250 105 1300 145 1360 155 1410 145 1460 152 1479'], ['B', '145 1228 130 1228'], ['B', '247 1322 155 1387'], ['B', '158 1435 215 1422'], ['B', '222 1423 250 1412 290 1363 325 1363 350 1325 390 1340 410 1315 438 1315'], ['B', '570 1326 605 1328 720 1365 760 1355 840 1360 880 1258 903 1238'], ['B', '840 1360 885 1362'], ['B', '548 1332 510 1355 460 1410 420 1479'], ['B', '0 1340 25 1375 35 1479'],
    ['C', '605 165 630 210 660 225 700 215 705 255 695 275 710 340 660 380 640 445 633 450'], ['C', '705 255 740 278 800 270 830 280 875 245 890 165 930 150 978 126'], ['C', '803 270 820 318 860 335 905 355 945 350 1015 400 1065 410 1120 408 1220 385 1290 345'], ['C', '1050 408 1070 450 1110 500 1155 542'],
    ['D', '0 353 20 340 25 313'], ['D', '185 126 195 142 245 163'], ['D', '418 267 435 275 450 305 468 350 480 375 520 405 550 480 555 545 575 590 610 605 655 640 675 690 660 708 600 740 598 819'], ['D', '400 317 415 323 450 320'],
    ['D', '620 126 655 175 700 195 705 245 725 258'], ['D', '758 126 760 155 740 215 725 220 735 370 755 410 760 440 800 508'], ['D', '1100 135 1063 150 1065 190 1005 240 990 270 950 280 930 350 850 430 838 480 800 510 740 568 670 610 657 640'], ['D', '740 568 830 625 900 635 930 665 1000 690 1042 682'],
    ['D', '367 460 385 500 395 565 460 605 462 645 495 680 497 708'], ['D', '500 730 550 755 595 798'], ['D', '237 743 300 780 380 819'], ['D', '1178 618 1240 650 1290 705'], ['D', '1150 720 1158 780 1195 798 1215 815'], ['D', '1195 745 1195 800'], ['D', '876 720 868 748'],
    ['E', '-77 355 -72 316 -45 312 -30 335 -5 350 60 350 75 362 88 385'], ['F', '462 300 470 340 508 382']
  ]
};
for (const kind of ['lane', 'rail', 'county', 'creek', 'ramp', 'red', 'hwy', 'slip', 'water']) {
  for (const [s, p] of roads[kind]) {
    const d = smooth(p), transform = place(s);
    const cased = { red: [11, 6, 'red'], ramp: [7, 3, 'red'], hwy: [19, 14, 'hwy'], slip: [11, 7, 'hwy'] }[kind];
    if (cased) {
      add(roadsLayer, 'path', { d, transform, class: 'road case', 'stroke-width': cased[0] });
      add(roadsLayer, 'path', { d, transform, class: 'road ' + cased[2], 'stroke-width': cased[1] });
    } else {
      add(roadsLayer, 'path', { d, transform, class: 'road ' + kind });
      if (kind === 'rail') add(roadsLayer, 'path', { d, transform, class: 'road', stroke: '#8c897b', 'stroke-width': 13, 'stroke-dasharray': '3 38' });
    }
    if (kind === 'red') add(roadsLayer, 'path', { d, transform, class: 'road case', 'stroke-width': 1, opacity: .5 });
  }
}

const labels = [
  ['A', 683, 256, -40, 'Paris Pike'], ['A', 1182, 122, 55, 'Muir Station Rd'], ['A', 968, 507, -47, 'Bryan Station Rd'], ['A', 1028, 580, 58, 'Castle'], ['A', 1062, 655, 55, 'Rock'], ['A', 1102, 718, 68, 'Way'],
  ['A', 435, 622, -28, 'The'], ['A', 512, 660, 42, 'Grange Ln'], ['A', 183, 78, 18, 'Plum'], ['A', 232, 78, -75, 'Ln'], ['A', 1062, 928, -8, 'Briar Hill Rd'], ['A', 512, 1192, 47, 'Hume Rd'], ['A', 490, 1340, 38, 'Call Dr'], ['A', 628, 1368, -15, 'Ami'], ['A', 648, 1335, 80, 'Ln'],
  ['A', 572, 558, 0, 'Lexington', 'park'], ['A', 572, 595, 0, 'Country', 'park'], ['A', 572, 633, 0, 'Club', 'park'], ['A', 1070, 1190, 30, 'David Fork', 'creekname'], ['A', 692, 1410, 82, 'North El', 'creekname'],
  ['B', 718, 80, 68, 'khorn Creek', 'creekname'], ['B', 890, 72, 16, 'Winchester Rd'], ['B', 578, 170, 75, 'Sir Barton'], ['B', 583, 265, -75, 'Way'], ['B', 465, 120, -80, 'Cardinal'], ['B', 490, 185, 15, 'St'], ['B', 470, 405, -45, 'Star Shoot'], ['B', 555, 350, 0, 'Pky'], ['B', 388, 482, 42, 'Liberty Rd'], ['B', 650, 503, -52, 'Bryant Rd'],
  ['B', 640, 600, -20, 'Sheffiel'], ['B', 672, 635, -60, 'd Pl'], ['B', 730, 682, -40, 'Chetford Dr'], ['B', 912, 630, 82, 'Polo Club Blvd'], ['B', 1005, 400, 72, 'Black'], ['B', 1058, 468, 47, 'ford Pky'], ['B', 318, 228, 40, 'Ln'], ['B', 345, 760, 48, 'azer Pky'], ['B', 232, 855, 48, 'ichmond Rd'], ['B', 680, 838, -2, 'Forest Hill Dr'], ['B', 858, 820, 0, 'Darnaby'], ['B', 1095, 820, -22, 'Todds Sta'],
  ['B', 122, 1055, -40, 'Squires Rd'], ['B', 285, 965, -15, 'Shore'], ['B', 300, 1010, -20, 'side Dr'], ['B', 390, 1100, 45, 'Somerset'], ['B', 435, 1100, -80, 'Pl'], ['B', 775, 1032, -30, 'Rward'], ['B', 805, 1060, 70, 'Ln'], ['B', 787, 1120, 30, 'Maxous Trl'], ['B', 160, 1290, 18, 'Long Ln'], ['B', 90, 1382, -60, 'Delo'], ['B', 145, 1370, 25, 'ng Dr'], ['B', 878, 1360, 36, 'Athens Boonesboro Rd'], ['B', 1132, 1365, -85, 'Canebrake Dr'],
  ['B', 1148, 322, 0, 'Greenbrier', 'park'], ['B', 1146, 358, 0, 'Golf And', 'park'], ['B', 1148, 396, 0, 'Country Club', 'park'], ['B', 504, 882, 0, 'Lakeside', 'park'], ['B', 505, 917, 0, 'Golf Course', 'park'], ['B', 516, 1040, 0, 'Jacobson', 'park'], ['B', 518, 1078, 0, 'Park', 'park'],
  ['C', 258, 280, 16, 'FAYETTE', 'fay'], ['C', 438, 230, -20, 'Keene Rd'], ['C', 375, 408, -28, 'Wind'], ['C', 468, 408, 8, 'Haven Dr'], ['C', 325, 492, -5, 'Stable'], ['C', 350, 560, 15, 'Way'], ['C', 158, 592, -80, 'Pearl Ln'], ['C', 125, 752, -68, 'Elkhorn Rd'], ['C', 620, 360, -65, 'Agape Dr'], ['C', 748, 360, -75, 'Clemens Dr'], ['C', 808, 528, 48, 'Glenview Dr'], ['C', 600, 580, -72, 'Lantern Way'], ['C', 900, 508, 72, 'Alta Ln'], ['C', 985, 168, -68, 'Roxbury'], ['C', 712, 145, -65, 'Dr'], ['C', 1130, 235, -28, 'Keithshire Way'],
  ['C', 1050, 385, 32, 'Higbee Mill Rd'], ['C', 1222, 440, 32, 'Marblerock'], ['C', 1215, 500, 15, 'Way'], ['C', 1095, 615, 22, 'Wyndham Hills Dr'], ['C', 1090, 685, 18, 'Hillside Dr'], ['C', 1235, 597, 5, 'Millpon'], ['C', 1272, 698, -82, 'Winthrop Dr'], ['C', 875, 800, -75, 'Way'],
  ['D', 125, 300, 0, 'Shillito', 'park'], ['D', 126, 338, 0, 'Park', 'park'], ['D', 385, 210, 0, 'Wilhite'], ['D', 420, 175, -72, 'Dr'], ['D', 388, 352, 35, 'Tartan Dr'], ['D', 592, 438, -62, 'Spangler Dr'], ['D', 810, 215, 68, 'Pepperhill'], ['D', 870, 282, 0, 'Rd'], ['D', 848, 410, -52, 'Greentree Rd'], ['D', 1138, 155, 15, 'Edgewater Dr'], ['D', 1125, 268, -28, 'Aqueduct'], ['D', 1175, 285, 75, 'Dr'], ['D', 525, 565, 35, 'Lenney'], ['D', 535, 612, -75, 'Dr'], ['D', 350, 600, -75, 'North'], ['D', 390, 652, 3, 'ampton Dr'], ['D', 28, 610, 8, 'd Rd'], ['D', 145, 720, -75, 'icholasville Rd'], ['D', 620, 742, -30, 'Forest Gln'], ['D', 665, 660, 80, 'Town'], ['D', 535, 798, 35, 'Clea'], ['D', 760, 790, 65, 'Tenb'], ['D', 275, 805, 25, 'Whitt'], ['D', 1165, 595, -48, 'Sundart Dr'], ['D', 1145, 740, 45, 'Armstrong Mill'], ['D', 1230, 708, 18, 'Prairie'], ['D', 1248, 670, 35, 'Cir'],
  ['E', 188, 300, 0, 'University', 'park'], ['E', 188, 334, 0, 'Club Of', 'park'], ['E', 188, 372, 0, 'Kentucky', 'park'], ['E', 635, 320, -55, 'N Y']
];
for (const [s, x, y, a, t, c] of labels) {
  const g = add(labelsLayer, 'g', { transform: place(s) });
  add(g, 'text', { class: 'lab ' + (c || ''), transform: `translate(${x} ${y}) rotate(${a})` }, t);
}

const shields = [['A', 834, 145, '27', 'us'], ['A', 1100, 380, '1970'], ['A', 794, 607, '3367'], ['A', 740, 831, '57'], ['A', 848, 1095, '64', 'i'], ['B', 730, 368, '1425'], ['B', 1101, 589, '2903'], ['B', 1113, 915, '1927'], ['B', 530, 1135, '418'], ['B', 1051, 1170, '75', 'i'], ['C', 751, 730, '1980'], ['D', 216, 160, '4']];
for (const [s, x, y, t, k] of shields) {
  const g = add(labelsLayer, 'g', { transform: place(s) + ` translate(${x} ${y})` });
  if (k === 'i') {
    add(g, 'path', { d: 'M-30-30H30Q38 8 0 26Q-38 8-30-30z', fill: '#f4f1e6', stroke: '#e0523d', 'stroke-width': 4 });
    add(g, 'path', { d: 'M-30-32H30L32-14H-32z', fill: '#e0523d' });
  } else if (k === 'us') add(g, 'path', { d: 'M-26-22Q0-16 26-22Q22 0 26 16Q10 14 0 22Q-10 14-26 16Q-22 0-26-22z', fill: '#f4f1e6', stroke: '#8c897b', 'stroke-width': 3 });
  else add(g, 'ellipse', { rx: 31, ry: 21, fill: '#f1efdf', stroke: '#a5a293', 'stroke-width': 2 });
  add(g, 'text', { class: 'lab shield', y: 1 }, t);
}
// Waterway lines run above the route markers.
add(labelsLayer, 'path', { d: smooth('1055 398 1082 405 1125 372 1165 360'), transform: place('A'), class: 'road water' });
add(labelsLayer, 'path', { d: smooth('185 126 195 142 245 163'), transform: place('D'), class: 'road water' });
```
